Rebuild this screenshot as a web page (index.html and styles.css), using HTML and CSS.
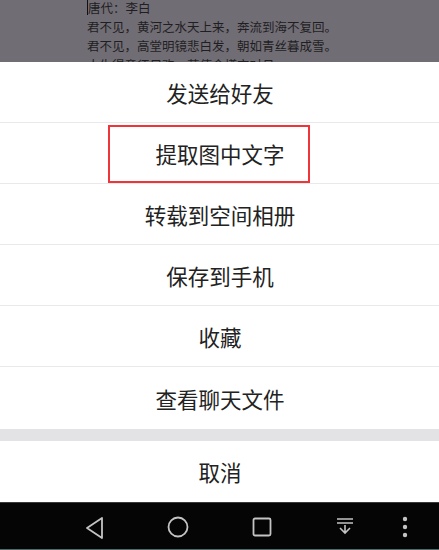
FILE: index.html
```html
<!DOCTYPE html>
<html lang="zh">
<head>
<meta charset="utf-8">
<link rel="stylesheet" href="styles.css">
</head>
<body>
<div class="screen">
  <div class="backdrop">
    <div class="poem">
      <div class="line first"><span class="cursor"></span>唐代：李白</div>
      <div class="line">君不见，黄河之水天上来，奔流到海不复回。</div>
      <div class="line">君不见，高堂明镜悲白发，朝如青丝暮成雪。</div>
      <div class="line">人生得意须尽欢，莫使金樽空对月。</div>
    </div>
  </div>
  <div class="sheet">
    <div class="item">发送给好友</div>
    <div class="item highlight"><span class="redbox"></span>提取图中文字</div>
    <div class="item">转载到空间相册</div>
    <div class="item">保存到手机</div>
    <div class="item">收藏</div>
    <div class="item last">查看聊天文件</div>
    <div class="gap"></div>
    <div class="item cancel">取消</div>
  </div>
  <div class="navbar">
    <svg class="nav back" width="22" height="24" viewBox="0 0 22 24"><path d="M18 2 L3 12 L18 22 Z" fill="none" stroke="#c4c4c4" stroke-width="1.8" stroke-linejoin="round"/></svg>
    <svg class="nav home" width="24" height="24" viewBox="0 0 24 24"><circle cx="12" cy="12" r="9.5" fill="none" stroke="#c4c4c4" stroke-width="1.8"/></svg>
    <svg class="nav recent" width="22" height="22" viewBox="0 0 22 22"><rect x="2.5" y="2.5" width="17" height="17" rx="1.5" fill="none" stroke="#c4c4c4" stroke-width="1.8"/></svg>
    <svg class="nav down" width="20" height="20" viewBox="0 0 20 20"><path d="M2 3 H18 M2 7 H18 M10 9 V17 M5 12 L10 17 L15 12" fill="none" stroke="#c4c4c4" stroke-width="1.6"/></svg>
    <svg class="nav more" width="8" height="22" viewBox="0 0 8 22"><circle cx="4" cy="3" r="2.2" fill="#c4c4c4"/><circle cx="4" cy="11" r="2.2" fill="#c4c4c4"/><circle cx="4" cy="19" r="2.2" fill="#c4c4c4"/></svg>
  </div>
</div>
</body>
</html>
```

FILE: styles.css
```css
* { box-sizing: border-box; }
html, body { margin: 0; padding: 0; }
body {
  width: 439px;
  height: 550px;
  overflow: hidden;
  font-family: "Noto Sans CJK SC", "Noto Sans", sans-serif;
  background: #fff;
}
.screen {
  display: flex;
  flex-direction: column;
  width: 439px;
  height: 550px;
}
.backdrop {
  height: 62px;
  flex: none;
  background: #716d75;
  overflow: hidden;
  padding-left: 87px;
}
.poem {
  margin-top: -2px;
}
.line {
  font-size: 12.5px;
  line-height: 19px;
  color: #1f1e22;
  white-space: nowrap;
  font-family: "Noto Sans CJK SC", sans-serif;
}
.line.first {
  display: flex;
  align-items: center;
}
.cursor {
  display: inline-block;
  width: 1px;
  height: 15px;
  background: #111;
}
.sheet {
  display: flex;
  flex-direction: column;
  flex: none;
}
.item {
  height: 61px;
  display: flex;
  align-items: center;
  justify-content: center;
  font-size: 21.5px;
  color: #222;
  border-bottom: 1px solid #e9e9eb;
  position: relative;
  padding-left: 1px;
}
.item.last {
  height: 62px;
  border-bottom: none;
}
.gap {
  height: 12px;
  background: #e3e2e4;
}
.item.cancel {
  height: 61px;
  border-bottom: none;
}
.redbox {
  position: absolute;
  left: 108px;
  top: 2px;
  width: 202px;
  height: 58px;
  border: 2px solid #f0353a;
}
.navbar {
  flex: 1;
  background: #050505;
  border-top: 1px solid #3a3a3a;
  border-bottom: 1px solid #4d6b6b;
  position: relative;
}
.nav {
  position: absolute;
}
.back { left: 84px; top: 13px; }
.home { left: 166px; top: 12px; }
.recent { left: 251px; top: 13px; }
.down { left: 335px; top: 13px; }
.more { left: 401px; top: 13px; }
```
